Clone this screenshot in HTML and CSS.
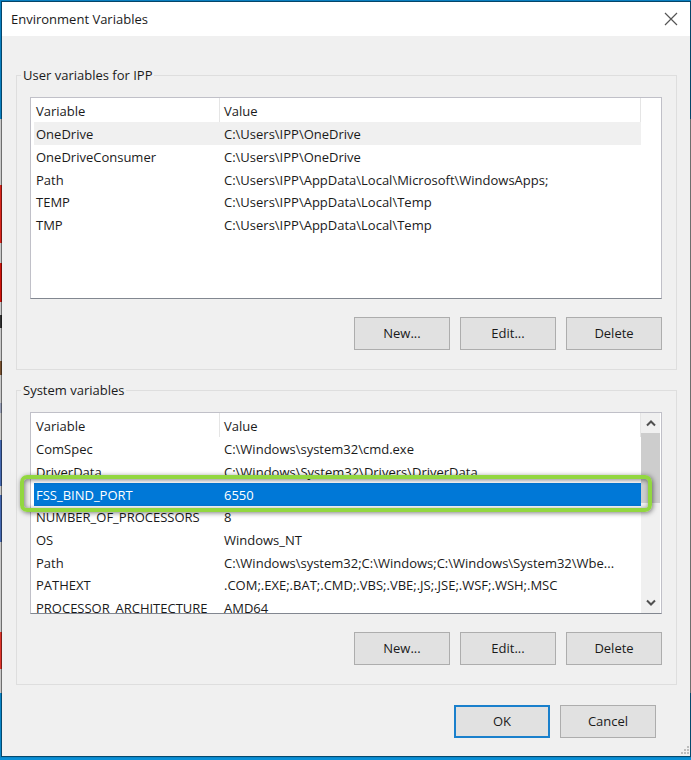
FILE: index.html
```html
<!DOCTYPE html>
<html lang="en">
<head>
    <meta charset="UTF-8">
    <meta name="viewport" content="width=device-width, initial-scale=1.0">
    <title>Environment Variables</title>
    <link rel="stylesheet" href="styles.css">
</head>
<body>
    <div class="dialog">
        <header class="titlebar">
            <h1 class="titlebar__text">Environment Variables</h1>
            <button type="button" class="titlebar__close" aria-label="Close">
                <svg width="14" height="14" viewBox="0 0 14 14"><path d="M1 1L13 13M13 1L1 13" fill="none" stroke="#555" stroke-width="1.2"/></svg>
            </button>
        </header>
        <main class="client">
            <fieldset class="group">
                <legend>User variables for IPP</legend>
                <div class="group__body">
                    <div class="list">
                        <table class="vars">
                            <thead>
                                <tr><th class="vars__name">Variable</th><th>Value</th></tr>
                            </thead>
                            <tbody>
                                <tr class="current"><td>OneDrive</td><td>C:\Users\IPP\OneDrive</td></tr>
                                <tr><td>OneDriveConsumer</td><td>C:\Users\IPP\OneDrive</td></tr>
                                <tr><td>Path</td><td>C:\Users\IPP\AppData\Local\Microsoft\WindowsApps;</td></tr>
                                <tr><td>TEMP</td><td>C:\Users\IPP\AppData\Local\Temp</td></tr>
                                <tr><td>TMP</td><td>C:\Users\IPP\AppData\Local\Temp</td></tr>
                            </tbody>
                        </table>
                    </div>
                    <div class="buttons">
                        <button type="button" class="btn">New...</button>
                        <button type="button" class="btn">Edit...</button>
                        <button type="button" class="btn">Delete</button>
                    </div>
                </div>
            </fieldset>
            <fieldset class="group">
                <legend>System variables</legend>
                <div class="group__body">
                    <div class="list">
                        <table class="vars">
                            <thead>
                                <tr><th class="vars__name">Variable</th><th>Value</th></tr>
                            </thead>
                            <tbody>
                                <tr><td>ComSpec</td><td>C:\Windows\system32\cmd.exe</td></tr>
                                <tr><td>DriverData</td><td>C:\Windows\System32\Drivers\DriverData</td></tr>
                                <tr class="selected"><td>FSS_BIND_PORT</td><td>6550</td></tr>
                                <tr><td>NUMBER_OF_PROCESSORS</td><td>8</td></tr>
                                <tr><td>OS</td><td>Windows_NT</td></tr>
                                <tr><td>Path</td><td>C:\Windows\system32;C:\Windows;C:\Windows\System32\Wbe...</td></tr>
                                <tr><td>PATHEXT</td><td>.COM;.EXE;.BAT;.CMD;.VBS;.VBE;.JS;.JSE;.WSF;.WSH;.MSC</td></tr>
                                <tr><td>PROCESSOR_ARCHITECTURE</td><td>AMD64</td></tr>
                            </tbody>
                        </table>
                        <div class="scrollbar">
                            <button type="button" class="scrollbar__arrow" aria-label="Scroll up">
                                <svg width="10" height="8" viewBox="0 0 10 8"><path d="M1 6.5L5 2.5L9 6.5" fill="none" stroke="#505050" stroke-width="2"/></svg>
                            </button>
                            <div class="scrollbar__thumb"></div>
                            <button type="button" class="scrollbar__arrow scrollbar__arrow--down" aria-label="Scroll down">
                                <svg width="10" height="8" viewBox="0 0 10 8"><path d="M1 1.5L5 5.5L9 1.5" fill="none" stroke="#505050" stroke-width="2"/></svg>
                            </button>
                        </div>
                    </div>
                    <div class="buttons">
                        <button type="button" class="btn">New...</button>
                        <button type="button" class="btn">Edit...</button>
                        <button type="button" class="btn">Delete</button>
                    </div>
                    <div class="marker"></div>
                </div>
            </fieldset>
            <div class="buttons buttons--dialog">
                <button type="button" class="btn btn--default">OK</button>
                <button type="button" class="btn">Cancel</button>
            </div>
        </main>
        <svg class="grip" width="9" height="9" viewBox="0 0 9 9"><path d="M7 0h2v2h-2zM4 3h2v2h-2zM7 3h2v2h-2zM1 6h2v2h-2zM4 6h2v2h-2zM7 6h2v2h-2z" fill="#bdbdbd"/></svg>
    </div>
</body>
</html>
```

FILE: styles.css
```css
* {
    box-sizing: border-box;
}

/* desktop showing round the dialog */
body {
    margin: 0;
    min-height: 100vh;
    padding: 1px 0 2px 1px;
    font-family: "Open Sans", "Noto Sans", sans-serif;
    font-size: 13px;
    line-height: 21px;
    color: #1a1a1a;
    background-color: #0a8fd6;
    background-image:
        linear-gradient(transparent 185px, #d9261c 185px 243px, transparent 243px 263px, #d0140c 263px 302px, transparent 302px 315px, #333 315px 328px, transparent 328px 361px, #7a5230 361px 375px, transparent 375px 403px, #98a0b8 403px 413px, transparent 413px 440px, #4468b0 440px 486px, transparent 486px 495px, #4468b0 495px 542px, transparent 542px 632px, #e0352b 632px 669px, transparent 669px),
        linear-gradient(#0a7fc0 119px, #c8c8c8 119px 693px, #0a86c8 693px 758px, transparent 758px);
    background-size: 2px 100%, 100% 100%;
    background-repeat: no-repeat;
}

.dialog {
    position: relative;
    border: 1px solid rgba(0, 0, 0, 0.45);
    background: #f0f0f0;
    background-clip: padding-box;
}

.titlebar {
    display: flex;
    align-items: center;
    justify-content: space-between;
    height: 34px;
    padding: 0 12px 0 9px;
    background: #fff;
}

.titlebar__text {
    margin: 0;
    font-size: 13px;
    font-weight: normal;
}

.titlebar__close {
    display: flex;
    padding: 0;
    border: none;
    background: none;
}

.client {
    display: flex;
    flex-direction: column;
    gap: 10px;
    padding: 29px 13px 18px 14px;
}

.group {
    min-width: 0;
    margin: 0;
    padding: 11px 4px 19px;
    border: 1px solid #dedede;
}

.group legend {
    padding: 0 2px;
}

.group__body {
    position: relative;
    padding: 0 10px 0 9px;
}

.list {
    display: grid;
    grid-template-columns: minmax(0, 1fr) 20px;
    grid-template-rows: 100%;
    height: 202px;
    padding-left: 3px;
    overflow: hidden;
    border: 1px solid #c0c0c8;
    border-bottom-color: #828790;
    background: #fff;
}

.vars {
    width: 100%;
    align-self: start;
    table-layout: fixed;
    border-collapse: separate;
    border-spacing: 0;
}

.vars th,
.vars td {
    height: 23px;
    padding: 0 4px;
    line-height: 22px;
    text-align: left;
    font-weight: normal;
    white-space: nowrap;
}

.vars th {
    height: 24px;
    padding-top: 1px;
    border-right: 1px solid #e5e5e5;
}

/* every third row is a pixel shorter, rows average 22.67px */
.vars tbody tr:nth-child(3n+4) td {
    height: 22px;
}

.vars th:first-child,
.vars td:first-child {
    padding-left: 2px;
    padding-right: 2px;
}

.vars .vars__name {
    width: 186px;
}

.current {
    background: #f0f0f0;
}

.selected {
    color: #fff;
    background: #0078d7;
}

.scrollbar {
    display: flex;
    flex-direction: column;
    margin-right: 1px;
    background: #f0f0f0;
}

.scrollbar__arrow {
    display: flex;
    align-items: center;
    justify-content: center;
    height: 20px;
    padding: 0;
    border: none;
    background: none;
}

.scrollbar__arrow--down {
    margin-top: auto;
}

.scrollbar__thumb {
    height: 70px;
    background: #cdcdcd;
}

.buttons {
    display: flex;
    justify-content: flex-end;
    gap: 10px;
    margin-top: 18px;
}

.buttons--dialog {
    margin-top: 10px;
    padding-right: 21px;
}

.btn {
    width: 96px;
    height: 33px;
    padding: 0;
    border: 1px solid #adadad;
    background: #e1e1e1;
    color: inherit;
    font: inherit;
}

.btn--default {
    border: 2px solid #1a80cc;
}

/* highlight frame over the selected row */
.marker {
    position: absolute;
    top: 63px;
    left: -1px;
    right: 20px;
    height: 37px;
    border: 4px solid #92d740;
    border-radius: 7px;
    box-shadow: 1px 1px 5px rgba(0, 0, 0, 0.5), inset 1px 1px 5px rgba(0, 0, 0, 0.5);
}

.grip {
    position: absolute;
    right: 1px;
    bottom: 1px;
}
```
